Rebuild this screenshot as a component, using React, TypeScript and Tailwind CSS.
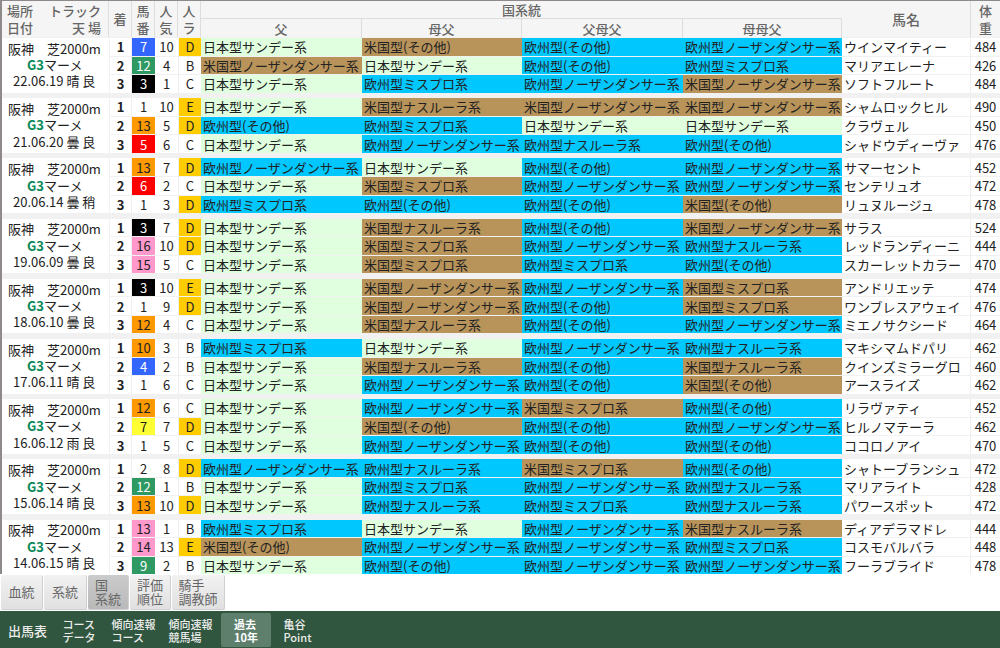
const FONT = "[font-family:'Noto_Sans_CJK_JP','Noto_Sans',sans-serif]";
const S = '日本型サンデー系', EO = '欧州型(その他)', EN = '欧州型ノーザンダンサー系', EM = '欧州型ミスプロ系', EH = '欧州型ナスルーラ系';
const AO = '米国型(その他)', AN = '米国型ノーザンダンサー系', AM = '米国型ミスプロ系', AH = '米国型ナスルーラ系';

type Row = [number, number, string, string, string, string, string, string, number];
type Race = { date: string; w: string; rows: Row[] };

const races: Race[] = [
  { date: '22.06.19', w: '晴 良', rows: [
    [7, 10, 'D', S, AO, EO, EN, 'ウインマイティー', 484],
    [12, 4, 'B', AN, S, EO, EM, 'マリアエレーナ', 426],
    [3, 1, 'C', S, EM, EN, AN, 'ソフトフルート', 484] ] },
  { date: '21.06.20', w: '曇 良', rows: [
    [1, 10, 'E', S, AH, AN, AN, 'シャムロックヒル', 490],
    [13, 5, 'D', EO, EM, S, S, 'クラヴェル', 450],
    [5, 6, 'C', S, EN, EH, EO, 'シャドウディーヴァ', 476] ] },
  { date: '20.06.14', w: '曇 稍', rows: [
    [13, 7, 'D', EN, S, EO, EN, 'サマーセント', 452],
    [6, 2, 'C', S, AM, EN, EN, 'センテリュオ', 472],
    [1, 3, 'D', EM, EO, EO, AO, 'リュヌルージュ', 478] ] },
  { date: '19.06.09', w: '曇 良', rows: [
    [3, 7, 'D', S, AH, EO, AN, 'サラス', 524],
    [16, 10, 'D', S, AM, EN, EH, 'レッドランディーニ', 444],
    [15, 5, 'C', S, AM, EM, EO, 'スカーレットカラー', 470] ] },
  { date: '18.06.10', w: '曇 良', rows: [
    [3, 10, 'E', S, AN, EN, AM, 'アンドリエッテ', 474],
    [1, 9, 'D', S, AN, EO, AM, 'ワンブレスアウェイ', 476],
    [12, 4, 'C', S, AH, EO, EN, 'ミエノサクシード', 464] ] },
  { date: '17.06.11', w: '晴 良', rows: [
    [10, 3, 'B', EM, S, EN, EH, 'マキシマムドパリ', 462],
    [4, 2, 'B', S, AH, EO, AH, 'クインズミラーグロ', 460],
    [1, 6, 'C', S, EN, EO, AO, 'アースライズ', 462] ] },
  { date: '16.06.12', w: '雨 良', rows: [
    [12, 6, 'C', S, EN, AM, EO, 'リラヴァティ', 452],
    [7, 7, 'D', S, AO, EO, EN, 'ヒルノマテーラ', 462],
    [1, 5, 'C', S, EN, EO, EO, 'ココロノアイ', 470] ] },
  { date: '15.06.14', w: '晴 良', rows: [
    [2, 8, 'D', EN, EH, AM, EO, 'シャトーブランシュ', 472],
    [12, 1, 'B', S, EM, EN, EH, 'マリアライト', 428],
    [13, 10, 'D', S, EH, EM, EH, 'パワースポット', 472] ] },
  { date: '14.06.15', w: '晴 良', rows: [
    [13, 1, 'B', EM, S, EN, AH, 'ディアデラマドレ', 444],
    [14, 13, 'E', AO, EN, EN, EM, 'コスモバルバラ', 448],
    [9, 2, 'B', S, EO, EN, EN, 'フーラブライド', 478] ] },
];

const gateColors: Record<string, string>[] = [
  { 7: 'bg-[#3366ff] text-white', 12: 'bg-[#2e9962] text-white', 3: 'bg-black text-white' },
  { 1: 'bg-white text-[#222]', 13: 'bg-[#ff9900] text-[#222]', 5: 'bg-[#ff0000] text-white' },
  { 13: 'bg-[#ff9900] text-[#222]', 6: 'bg-[#ff0000] text-white', 1: 'bg-white text-[#222]' },
  { 3: 'bg-black text-white', 16: 'bg-[#ff99cc] text-[#222]', 15: 'bg-[#ff99cc] text-[#222]' },
  { 3: 'bg-black text-white', 1: 'bg-white text-[#222]', 12: 'bg-[#ff9900] text-[#222]' },
  { 10: 'bg-[#ff9900] text-[#222]', 4: 'bg-[#3366ff] text-white', 1: 'bg-white text-[#222]' },
  { 12: 'bg-[#ff9900] text-[#222]', 7: 'bg-[#ffff33] text-[#222]', 1: 'bg-white text-[#222]' },
  { 2: 'bg-white text-[#222]', 12: 'bg-[#2e9962] text-white', 13: 'bg-[#ff9900] text-[#222]' },
  { 13: 'bg-[#ff99cc] text-[#222]', 14: 'bg-[#ff99cc] text-[#222]', 9: 'bg-[#2e9962] text-white' },
];

const typeBg = (t: string) =>
  t.startsWith('日本') ? 'bg-[#dfffdf]' : t.startsWith('米') ? 'bg-[#b8935a]' : 'bg-[#00c8ff]';

function Head({ children, className = '' }: { children: React.ReactNode; className?: string }) {
  return (
    <div className={`flex items-center justify-center text-center text-[#666] font-medium bg-[#f5f5f5] border-r border-[#ddd] ${className}`}>
      {children}
    </div>
  );
}

function TwoLines({ a, b, lh }: { a: string; b: string; lh: string }) {
  return (
    <div className="text-left">
      <div className={lh}>{a}</div>
      <div className={lh}>{b}</div>
    </div>
  );
}

function RaceBlock({ race, index }: { race: Race; index: number }) {
  return (
    <div className="flex h-[54.7px] bg-[#f1f1f1] text-[#222]">
      <div className="w-[107px] shrink-0 bg-white mr-px flex flex-col justify-center text-[13px]">
        <div className="w-full pl-[6px] whitespace-pre leading-[16.3px]">阪神　芝2000m</div>
        <div className="w-full pl-[25px] leading-[16.3px]"><span className="font-bold text-[#0a8a5a]">G3</span>マーメ</div>
        <div className="w-full pl-[11px] whitespace-pre leading-[16.3px]">{race.date} {race.w}</div>
      </div>
      <div className="flex-1 flex flex-col gap-px min-w-0">
        {race.rows.map((r, i) => (
          <div key={i} className="flex-1 min-h-0 grid grid-cols-[22px_23px_24px_22px_161px_160px_161px_159px_129px_1fr] text-[13px] leading-[17px]">
            <div className="bg-white border-r border-[#eee] flex items-center justify-center font-bold">{i + 1}</div>
            <div className={`flex items-center justify-center ${gateColors[index][r[0]]}`}>{r[0]}</div>
            <div className="bg-white flex items-center justify-center border-r border-[#eee]">{r[1]}</div>
            <div className={`flex items-center justify-center ${r[2] === 'D' || r[2] === 'E' ? 'bg-[#ffcc00]' : 'bg-white'}`}>{r[2]}</div>
            {[r[3], r[4], r[5], r[6]].map((t, j) => (
              <div key={j} className={`pl-[2px] whitespace-nowrap overflow-hidden flex items-center ${typeBg(t)}`}>{t}</div>
            ))}
            <div className="bg-white pl-[2px] whitespace-nowrap overflow-hidden flex items-center border-r border-[#eee]">{r[7]}</div>
            <div className="bg-white flex items-center justify-center">{r[8]}</div>
          </div>
        ))}
      </div>
    </div>
  );
}

const typeTabs: { a: string; b?: string; w: string; active?: boolean }[] = [
  { a: '血統', w: 'w-[42px]' },
  { a: '系統', w: 'w-[43px]' },
  { a: '国', b: '系統', w: 'w-[41px]', active: true },
  { a: '評価', b: '順位', w: 'w-[41px]' },
  { a: '騎手', b: '調教師', w: 'w-[53px]' },
];
const navTabs: { a: string; b: string; w: string; active?: boolean }[] = [
  { a: 'コース', b: 'データ', w: 'w-[52px]' },
  { a: '傾向速報', b: 'コース', w: 'w-[57px]' },
  { a: '傾向速報', b: '競馬場', w: 'w-[57px] mr-[2px]' },
  { a: '過去', b: '10年', w: 'w-[50px]', active: true },
  { a: '亀谷', b: 'Point', w: 'w-[53px]' },
];

export default function App() {
  return (
    <div className={`w-[1000px] h-[648px] overflow-hidden bg-white flex flex-col ${FONT}`}>
      <div className="bg-[#f1f1f1] border-l-2 border-t border-[#8f8a8a] flex flex-col">
        <div className="flex h-[36px] text-[13px]">
          <div className="w-[107px] shrink-0 flex flex-col justify-center bg-[#f5f5f5] border-r border-[#ddd] text-[#666] font-medium pl-[5px] pr-[7px]">
            <div className="flex justify-between leading-[17px]"><span>場所</span><span>トラック</span></div>
            <div className="flex justify-between leading-[17px]"><span>日付</span><span>天 場</span></div>
          </div>
          <Head className="w-[23px] font-bold">着</Head>
          <Head className="w-[23px]"><TwoLines a="馬" b="番" lh="leading-[17.5px]" /></Head>
          <Head className="w-[23px]"><TwoLines a="人" b="気" lh="leading-[17.5px]" /></Head>
          <Head className="w-[23px]"><TwoLines a="人" b="ラ" lh="leading-[17.5px]" /></Head>
          <div className="w-[641px] flex flex-col bg-[#f5f5f5] font-medium">
            <div className="h-[18px] flex items-center justify-center text-[#666] border-b border-[#ddd]">国系統</div>
            <div className="flex-1 flex text-[#666]">
              <div className="w-[161px] text-center border-r border-[#ddd] leading-[19px]">父</div>
              <div className="w-[160px] text-center border-r border-[#ddd] leading-[19px]">母父</div>
              <div className="w-[161px] text-center border-r border-[#ddd] leading-[19px]">父母父</div>
              <div className="w-[159px] text-center border-r border-[#ddd] leading-[19px]">母母父</div>
            </div>
          </div>
          <Head className="w-[129px] font-bold text-[14px]">馬名</Head>
          <Head className="flex-1 border-r-0"><TwoLines a="体" b="重" lh="leading-[17.5px]" /></Head>
        </div>
        <div className="flex flex-col gap-[5.5px] pt-px">
          {races.map((r, i) => <RaceBlock key={i} race={r} index={i} />)}
        </div>
      </div>
      <div className="flex-1 min-h-0 flex items-end pl-[1px] text-[13px] text-[#666]">
        {typeTabs.map((t, i) => (
          <div key={i} className={`flex items-center justify-center h-[35px] mr-px border-r border-b border-[#cfcfcf] rounded-[2px] ${t.w} ${t.active ? 'bg-gradient-to-b from-[#cbcbcb] to-[#b9b9b9]' : 'bg-gradient-to-b from-[#f2f2f2] to-[#e0e0e0]'}`}>
            {t.b ? <TwoLines a={t.a} b={t.b} lh="leading-[14px]" /> : t.a}
          </div>
        ))}
      </div>
      <div className="h-[37px] mt-px shrink-0 bg-[#30563f] flex items-center text-[#ececec] pl-[8px]">
        <div className="text-[13px] font-medium w-[45px] pt-[3px]">出馬表</div>
        {navTabs.map((t, i) => (
          <div key={i} className={`h-[34px] flex items-center justify-center text-[11px] rounded-[2px] pt-[3px] ${t.w} ${t.active ? 'bg-[#5d7f6c] font-bold text-white' : 'font-medium'}`}>
            <TwoLines a={t.a} b={t.b} lh="leading-[12.7px]" />
          </div>
        ))}
      </div>
    </div>
  );
}
